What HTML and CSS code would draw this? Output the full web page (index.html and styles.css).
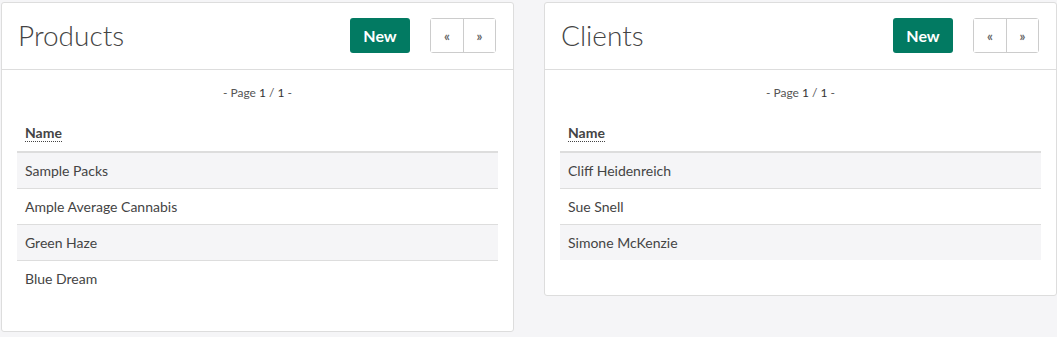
FILE: index.html
```html
<!DOCTYPE html>
<html lang="en">
<head>
  <meta charset="UTF-8">
  <title>Products and Clients</title>
  <link rel="stylesheet" href="styles.css">
</head>
<body>

  <div class="board">

    <div class="panel">
      <div class="panel-header">
        <h2>Products</h2>
        <button class="btn-new">New</button>
        <div class="pager">
          <button>&laquo;</button>
          <button>&raquo;</button>
        </div>
      </div>
      <div class="panel-body">
        <div class="page-info">- Page <b>1</b> / <b>1</b> -</div>
        <table class="list">
          <thead>
            <tr><th><span class="sortable">Name</span></th></tr>
          </thead>
          <tbody>
            <tr><td>Sample Packs</td></tr>
            <tr><td>Ample Average Cannabis</td></tr>
            <tr><td>Green Haze</td></tr>
            <tr><td>Blue Dream</td></tr>
          </tbody>
        </table>
      </div>
    </div>

    <div class="panel">
      <div class="panel-header">
        <h2>Clients</h2>
        <button class="btn-new">New</button>
        <div class="pager">
          <button>&laquo;</button>
          <button>&raquo;</button>
        </div>
      </div>
      <div class="panel-body">
        <div class="page-info">- Page <b>1</b> / <b>1</b> -</div>
        <table class="list">
          <thead>
            <tr><th><span class="sortable">Name</span></th></tr>
          </thead>
          <tbody>
            <tr><td>Cliff Heidenreich</td></tr>
            <tr><td>Sue Snell</td></tr>
            <tr><td>Simone McKenzie</td></tr>
          </tbody>
        </table>
      </div>
    </div>

  </div>

</body>
</html>
```

FILE: styles.css
```css
body {
  font-family: Lato, 'Open Sans', sans-serif;
  background-color: #f5f5f7;
  color: #444;
  margin: 0;
  padding: 2px 0 0 1px;
}
.board {
  display: grid;
  grid-template-columns: 1fr 1fr;
  gap: 30px;
  align-items: start;
}
.panel {
  background-color: #fff;
  border: 1px solid #ddd;
  border-radius: 3px;
}
.panel-header {
  display: flex;
  align-items: center;
  padding: 15px 17px 16px 16px;
  border-bottom: 1px solid #ddd;
}
.panel-header h2 {
  flex: 1;
  margin: 0;
  font-size: 28px;
  font-weight: 300;
  color: #444;
  line-height: 33px;
}
.btn-new {
  font-family: Lato, sans-serif;
  font-size: 16px;
  font-weight: 700;
  background-color: #027a62;
  color: #fff;
  border: none;
  border-radius: 3px;
  width: 60px;
  height: 35px;
  margin-right: 20px;
  padding: 0;
  cursor: pointer;
}
.pager {
  display: flex;
  border: 1px solid #ccc;
  border-radius: 3px;
  height: 33px;
}
.pager button {
  width: 32px;
  border: none;
  background: #fff;
  color: #666;
  font-family: Lato, sans-serif;
  font-size: 13px;
  font-weight: 700;
  padding: 0;
  cursor: pointer;
}
.pager button + button {
  border-left: 1px solid #ccc;
}
.panel-body {
  padding: 14px 15px 15px;
}
.page-info {
  text-align: center;
  font-size: 12px;
  line-height: 17px;
  color: #555;
  margin-bottom: 14px;
}
.page-info b {
  font-weight: 400;
  color: #333;
}
.list {
  width: 100%;
  border-collapse: collapse;
  margin-bottom: 20px;
  font-size: 14px;
}
.list th {
  text-align: left;
  font-weight: 700;
  padding: 8px;
  line-height: 20px;
  border-bottom: 2px solid #ddd;
}
.sortable {
  border-bottom: 1px dotted #444;
}
.list td {
  padding: 8px;
  line-height: 19px;
  border-top: 1px solid #ddd;
}
.list thead + tbody tr:first-child td {
  border-top: none;
}
.list tbody tr:nth-child(odd) td {
  background-color: #f5f5f7;
}
```
